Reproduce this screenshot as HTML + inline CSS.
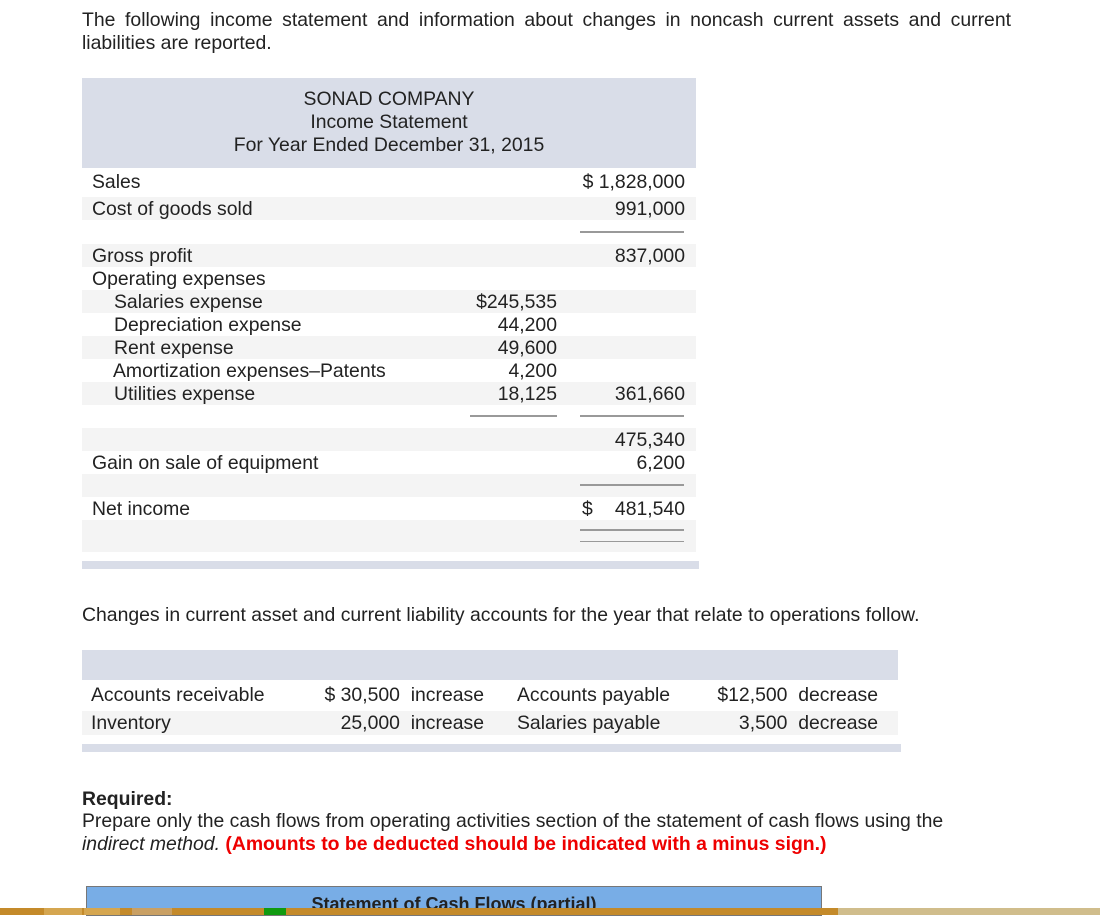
<!DOCTYPE html>
<html><head><style>
body{margin:0;width:1100px;height:915px;position:relative;overflow:hidden;background:#fff;font-family:"Liberation Sans",Arial,sans-serif;color:#222;font-size:19.4px}
.a{position:absolute;white-space:nowrap}
.r{position:absolute;left:82px;width:614px;height:23px}
.g{background:#f4f4f4}
.t{position:absolute;line-height:23px;white-space:nowrap}
.n{position:absolute;line-height:23px;text-align:right;white-space:nowrap}
.ln{position:absolute;height:2px;background:#999}
</style></head><body>
<div class="a" style="left:82px;top:9px;line-height:23px;white-space:normal;width:929px;text-align:justify">The following income statement and information about changes in noncash current assets and current liabilities are reported.</div>

<div class="a" style="left:82px;top:78px;width:614px;height:90px;background:#d9dde8;text-align:center;line-height:23px;padding-top:10px;box-sizing:border-box">SONAD COMPANY<br>Income Statement<br>For Year Ended December 31, 2015</div>

<div class="r g" style="top:197px"></div>
<div class="r g" style="top:244px"></div>
<div class="r g" style="top:290px"></div>
<div class="r g" style="top:336px"></div>
<div class="r g" style="top:382px"></div>
<div class="r g" style="top:428px"></div>
<div class="r g" style="top:474px"></div>
<div class="r g" style="top:520px;height:32px"></div>
<div class="a" style="left:82px;top:561px;width:617px;height:8px;background:#d9dde8"></div>

<div style="position:absolute;left:0;top:1px;width:1100px;height:915px">
<div class="t" style="left:92px;top:170px">Sales</div>
<div class="t" style="left:92px;top:197px">Cost of goods sold</div>
<div class="t" style="left:92px;top:244px">Gross profit</div>
<div class="t" style="left:92px;top:267px">Operating expenses</div>
<div class="t" style="left:114px;top:290px">Salaries expense</div>
<div class="t" style="left:114px;top:313px">Depreciation expense</div>
<div class="t" style="left:114px;top:336px">Rent expense</div>
<div class="t" style="left:113px;top:359px">Amortization expenses–Patents</div>
<div class="t" style="left:114px;top:382px">Utilities expense</div>
<div class="t" style="left:92px;top:451px">Gain on sale of equipment</div>
<div class="t" style="left:92px;top:497px">Net income</div>

<div class="n" style="right:543px;top:290px">$245,535</div>
<div class="n" style="right:543px;top:313px">44,200</div>
<div class="n" style="right:543px;top:336px">49,600</div>
<div class="n" style="right:543px;top:359px">4,200</div>
<div class="n" style="right:543px;top:382px">18,125</div>

<div class="n" style="right:415px;top:170px">$ 1,828,000</div>
<div class="n" style="right:415px;top:197px">991,000</div>
<div class="n" style="right:415px;top:244px">837,000</div>
<div class="n" style="right:415px;top:382px">361,660</div>
<div class="n" style="right:415px;top:428px">475,340</div>
<div class="n" style="right:415px;top:451px">6,200</div>
<div class="t" style="left:582px;top:497px">$</div>
<div class="n" style="right:415px;top:497px">481,540</div>

<div class="t" style="left:91px;top:683px">Accounts receivable</div>
<div class="t" style="left:91px;top:711px">Inventory</div>
<div class="n" style="right:616px;top:683px">$ 30,500&nbsp; increase</div>
<div class="n" style="right:616px;top:711px">25,000&nbsp; increase</div>
<div class="t" style="left:517px;top:683px">Accounts payable</div>
<div class="t" style="left:517px;top:711px">Salaries payable</div>
<div class="n" style="right:222px;top:683px">$12,500&nbsp; decrease</div>
<div class="n" style="right:222px;top:711px">3,500&nbsp; decrease</div>
<div class="a" style="left:82px;top:603px;line-height:23px">Changes in current asset and current liability accounts for the year that relate to operations follow.</div>
<div class="a" style="left:82px;top:787px;line-height:23px;font-weight:bold">Required:</div>
<div class="a" style="left:82px;top:809px;line-height:23px">Prepare only the cash flows from operating activities section of the statement of cash flows using the</div>
<div class="a" style="left:82px;top:832px;line-height:23px"><i>indirect method.</i> <b style="color:#e00">(Amounts to be deducted should be indicated with a minus sign.)</b></div>
</div>

<div class="ln" style="left:580px;width:104px;top:231px"></div>
<div class="ln" style="left:470px;width:87px;top:415px"></div>
<div class="ln" style="left:580px;width:104px;top:415px"></div>
<div class="ln" style="left:580px;width:104px;top:484px"></div>
<div class="ln" style="left:580px;width:104px;top:529px"></div>
<div class="ln" style="left:580px;width:104px;top:541px;height:1px"></div>

<div class="a" style="left:82px;top:650px;width:816px;height:30px;background:#d9dde8"></div>
<div class="a" style="left:82px;top:711px;width:816px;height:24px;background:#f4f4f4;z-index:-1"></div>
<div class="a" style="left:82px;top:744px;width:819px;height:8px;background:#d9dde8"></div>

<div class="a" style="left:86px;top:886px;width:736px;height:30px;background:#78ade6;border:1px solid #777;box-sizing:border-box;text-align:center;font-weight:bold;line-height:30px;padding-top:2px;font-size:18px">Statement of Cash Flows (partial)</div>
<div class="a" style="left:0;top:908px;width:838px;height:7px;background:#c48a2a"></div>
<div class="a" style="left:44px;top:908px;width:38px;height:7px;background:#d5a650"></div>
<div class="a" style="left:84px;top:908px;width:36px;height:7px;background:#d5a650"></div>
<div class="a" style="left:132px;top:908px;width:40px;height:7px;background:#c9a064"></div>
<div class="a" style="left:264px;top:908px;width:22px;height:7px;background:#109a10"></div>
<div class="a" style="left:838px;top:908px;width:262px;height:7px;background:#d0bd8c"></div>
</body></html>
